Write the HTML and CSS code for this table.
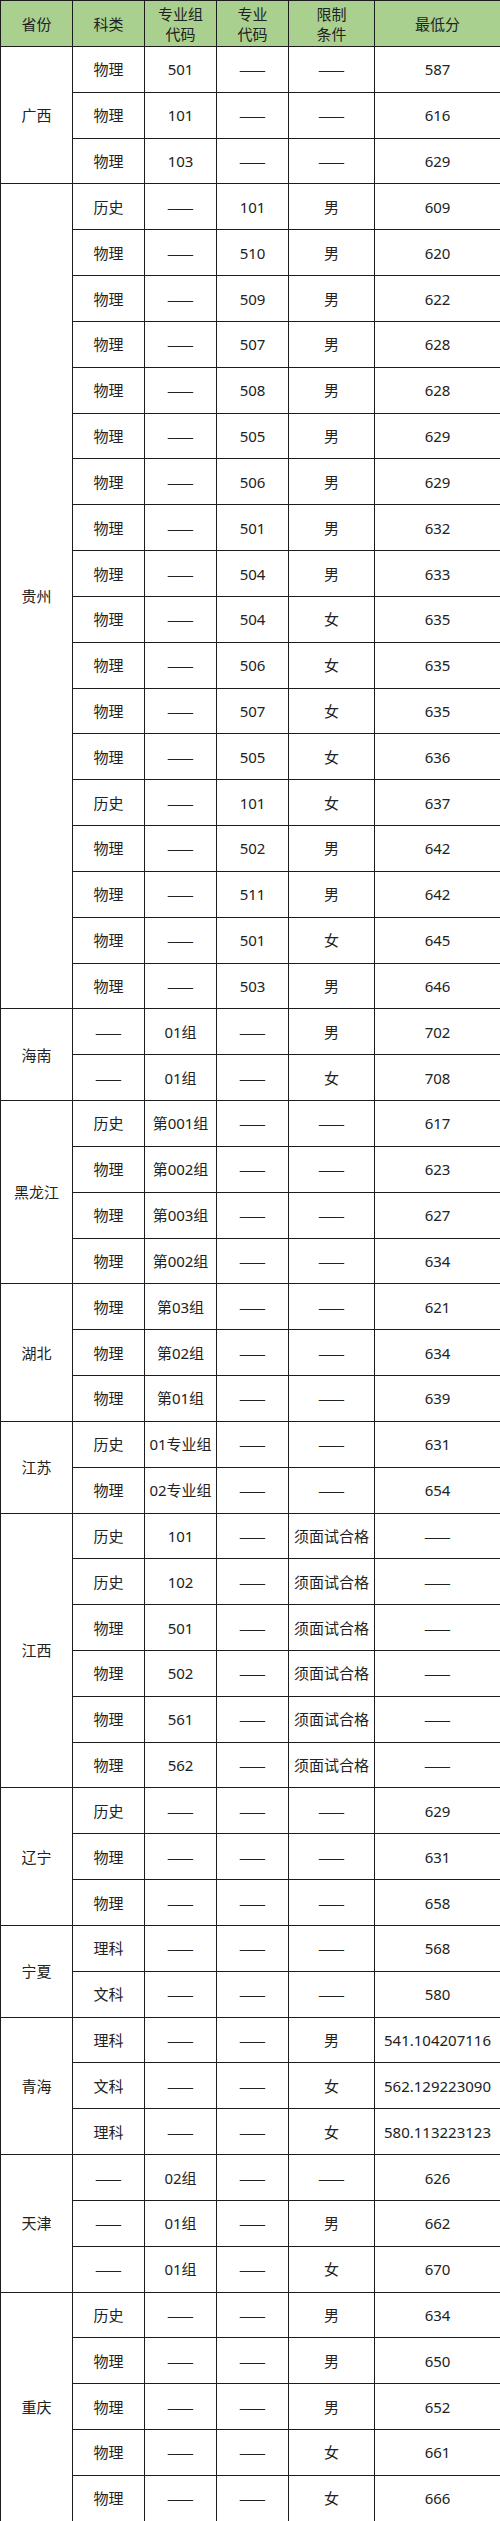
FILE: index.html
```html
<!DOCTYPE html>
<html lang="zh-CN">
<head>
<meta charset="utf-8">
<title>录取分数</title>
<link rel="stylesheet" href="styles.css">
</head>
<body>
<table class="scores">
<colgroup>
<col class="c1"><col class="c2"><col class="c3"><col class="c4"><col class="c5"><col class="c6">
</colgroup>
<thead>
<tr><th>省份</th><th>科类</th><th>专业组<br>代码</th><th>专业<br>代码</th><th>限制<br>条件</th><th>最低分</th></tr>
</thead>
<tbody>
<tr><td rowspan="3">广西</td><td>物理</td><td>501</td><td class="d">——</td><td class="d">——</td><td>587</td></tr>
<tr><td>物理</td><td>101</td><td class="d">——</td><td class="d">——</td><td>616</td></tr>
<tr><td>物理</td><td>103</td><td class="d">——</td><td class="d">——</td><td>629</td></tr>

<tr><td rowspan="18">贵州</td><td>历史</td><td class="d">——</td><td>101</td><td>男</td><td>609</td></tr>
<tr><td>物理</td><td class="d">——</td><td>510</td><td>男</td><td>620</td></tr>
<tr><td>物理</td><td class="d">——</td><td>509</td><td>男</td><td>622</td></tr>
<tr><td>物理</td><td class="d">——</td><td>507</td><td>男</td><td>628</td></tr>
<tr><td>物理</td><td class="d">——</td><td>508</td><td>男</td><td>628</td></tr>
<tr><td>物理</td><td class="d">——</td><td>505</td><td>男</td><td>629</td></tr>
<tr><td>物理</td><td class="d">——</td><td>506</td><td>男</td><td>629</td></tr>
<tr><td>物理</td><td class="d">——</td><td>501</td><td>男</td><td>632</td></tr>
<tr><td>物理</td><td class="d">——</td><td>504</td><td>男</td><td>633</td></tr>
<tr><td>物理</td><td class="d">——</td><td>504</td><td>女</td><td>635</td></tr>
<tr><td>物理</td><td class="d">——</td><td>506</td><td>女</td><td>635</td></tr>
<tr><td>物理</td><td class="d">——</td><td>507</td><td>女</td><td>635</td></tr>
<tr><td>物理</td><td class="d">——</td><td>505</td><td>女</td><td>636</td></tr>
<tr><td>历史</td><td class="d">——</td><td>101</td><td>女</td><td>637</td></tr>
<tr><td>物理</td><td class="d">——</td><td>502</td><td>男</td><td>642</td></tr>
<tr><td>物理</td><td class="d">——</td><td>511</td><td>男</td><td>642</td></tr>
<tr><td>物理</td><td class="d">——</td><td>501</td><td>女</td><td>645</td></tr>
<tr><td>物理</td><td class="d">——</td><td>503</td><td>男</td><td>646</td></tr>

<tr><td rowspan="2">海南</td><td class="d">——</td><td>01组</td><td class="d">——</td><td>男</td><td>702</td></tr>
<tr><td class="d">——</td><td>01组</td><td class="d">——</td><td>女</td><td>708</td></tr>

<tr><td rowspan="4">黑龙江</td><td>历史</td><td>第001组</td><td class="d">——</td><td class="d">——</td><td>617</td></tr>
<tr><td>物理</td><td>第002组</td><td class="d">——</td><td class="d">——</td><td>623</td></tr>
<tr><td>物理</td><td>第003组</td><td class="d">——</td><td class="d">——</td><td>627</td></tr>
<tr><td>物理</td><td>第002组</td><td class="d">——</td><td class="d">——</td><td>634</td></tr>

<tr><td rowspan="3">湖北</td><td>物理</td><td>第03组</td><td class="d">——</td><td class="d">——</td><td>621</td></tr>
<tr><td>物理</td><td>第02组</td><td class="d">——</td><td class="d">——</td><td>634</td></tr>
<tr><td>物理</td><td>第01组</td><td class="d">——</td><td class="d">——</td><td>639</td></tr>

<tr><td rowspan="2">江苏</td><td>历史</td><td>01专业组</td><td class="d">——</td><td class="d">——</td><td>631</td></tr>
<tr><td>物理</td><td>02专业组</td><td class="d">——</td><td class="d">——</td><td>654</td></tr>

<tr><td rowspan="6">江西</td><td>历史</td><td>101</td><td class="d">——</td><td>须面试合格</td><td class="d">——</td></tr>
<tr><td>历史</td><td>102</td><td class="d">——</td><td>须面试合格</td><td class="d">——</td></tr>
<tr><td>物理</td><td>501</td><td class="d">——</td><td>须面试合格</td><td class="d">——</td></tr>
<tr><td>物理</td><td>502</td><td class="d">——</td><td>须面试合格</td><td class="d">——</td></tr>
<tr><td>物理</td><td>561</td><td class="d">——</td><td>须面试合格</td><td class="d">——</td></tr>
<tr><td>物理</td><td>562</td><td class="d">——</td><td>须面试合格</td><td class="d">——</td></tr>

<tr><td rowspan="3">辽宁</td><td>历史</td><td class="d">——</td><td class="d">——</td><td class="d">——</td><td>629</td></tr>
<tr><td>物理</td><td class="d">——</td><td class="d">——</td><td class="d">——</td><td>631</td></tr>
<tr><td>物理</td><td class="d">——</td><td class="d">——</td><td class="d">——</td><td>658</td></tr>

<tr><td rowspan="2">宁夏</td><td>理科</td><td class="d">——</td><td class="d">——</td><td class="d">——</td><td>568</td></tr>
<tr><td>文科</td><td class="d">——</td><td class="d">——</td><td class="d">——</td><td>580</td></tr>

<tr><td rowspan="3">青海</td><td>理科</td><td class="d">——</td><td class="d">——</td><td>男</td><td>541.104207116</td></tr>
<tr><td>文科</td><td class="d">——</td><td class="d">——</td><td>女</td><td>562.129223090</td></tr>
<tr><td>理科</td><td class="d">——</td><td class="d">——</td><td>女</td><td>580.113223123</td></tr>

<tr><td rowspan="3">天津</td><td class="d">——</td><td>02组</td><td class="d">——</td><td class="d">——</td><td>626</td></tr>
<tr><td class="d">——</td><td>01组</td><td class="d">——</td><td>男</td><td>662</td></tr>
<tr><td class="d">——</td><td>01组</td><td class="d">——</td><td>女</td><td>670</td></tr>

<tr><td rowspan="5">重庆</td><td>历史</td><td class="d">——</td><td class="d">——</td><td>男</td><td>634</td></tr>
<tr><td>物理</td><td class="d">——</td><td class="d">——</td><td>男</td><td>650</td></tr>
<tr><td>物理</td><td class="d">——</td><td class="d">——</td><td>男</td><td>652</td></tr>
<tr><td>物理</td><td class="d">——</td><td class="d">——</td><td>女</td><td>661</td></tr>
<tr><td>物理</td><td class="d">——</td><td class="d">——</td><td>女</td><td>666</td></tr>
</tbody>
</table>
</body>
</html>
```

FILE: styles.css
```css
html, body {
  margin: 0;
  padding: 0;
  background: #ffffff;
}

.scores {
  width: 500px;
  border-collapse: collapse;
  table-layout: fixed;
  font-family: "Noto Sans", "Noto Sans CJK SC", sans-serif;
  font-size: 15px;
  color: #222222;
}

.c1 { width: 72px; }
.c2 { width: 72px; }
.c3 { width: 72px; }
.c4 { width: 72px; }
.c5 { width: 86px; }
.c6 { width: 126px; }

.scores th,
.scores td {
  border: 1px solid #1c1c1c;
  text-align: center;
  vertical-align: middle;
  padding: 0;
  white-space: nowrap;
  overflow: hidden;
}

.scores th {
  background: #a9d08e;
  font-weight: normal;
  line-height: 20px;
  height: 45px;
}

.scores tbody tr {
  height: 45.83px;
}

.scores td {
  line-height: 20px;
}

.scores td.d {
  font-family: "Noto Sans CJK SC", sans-serif;
  font-size: 16px;
}
```
